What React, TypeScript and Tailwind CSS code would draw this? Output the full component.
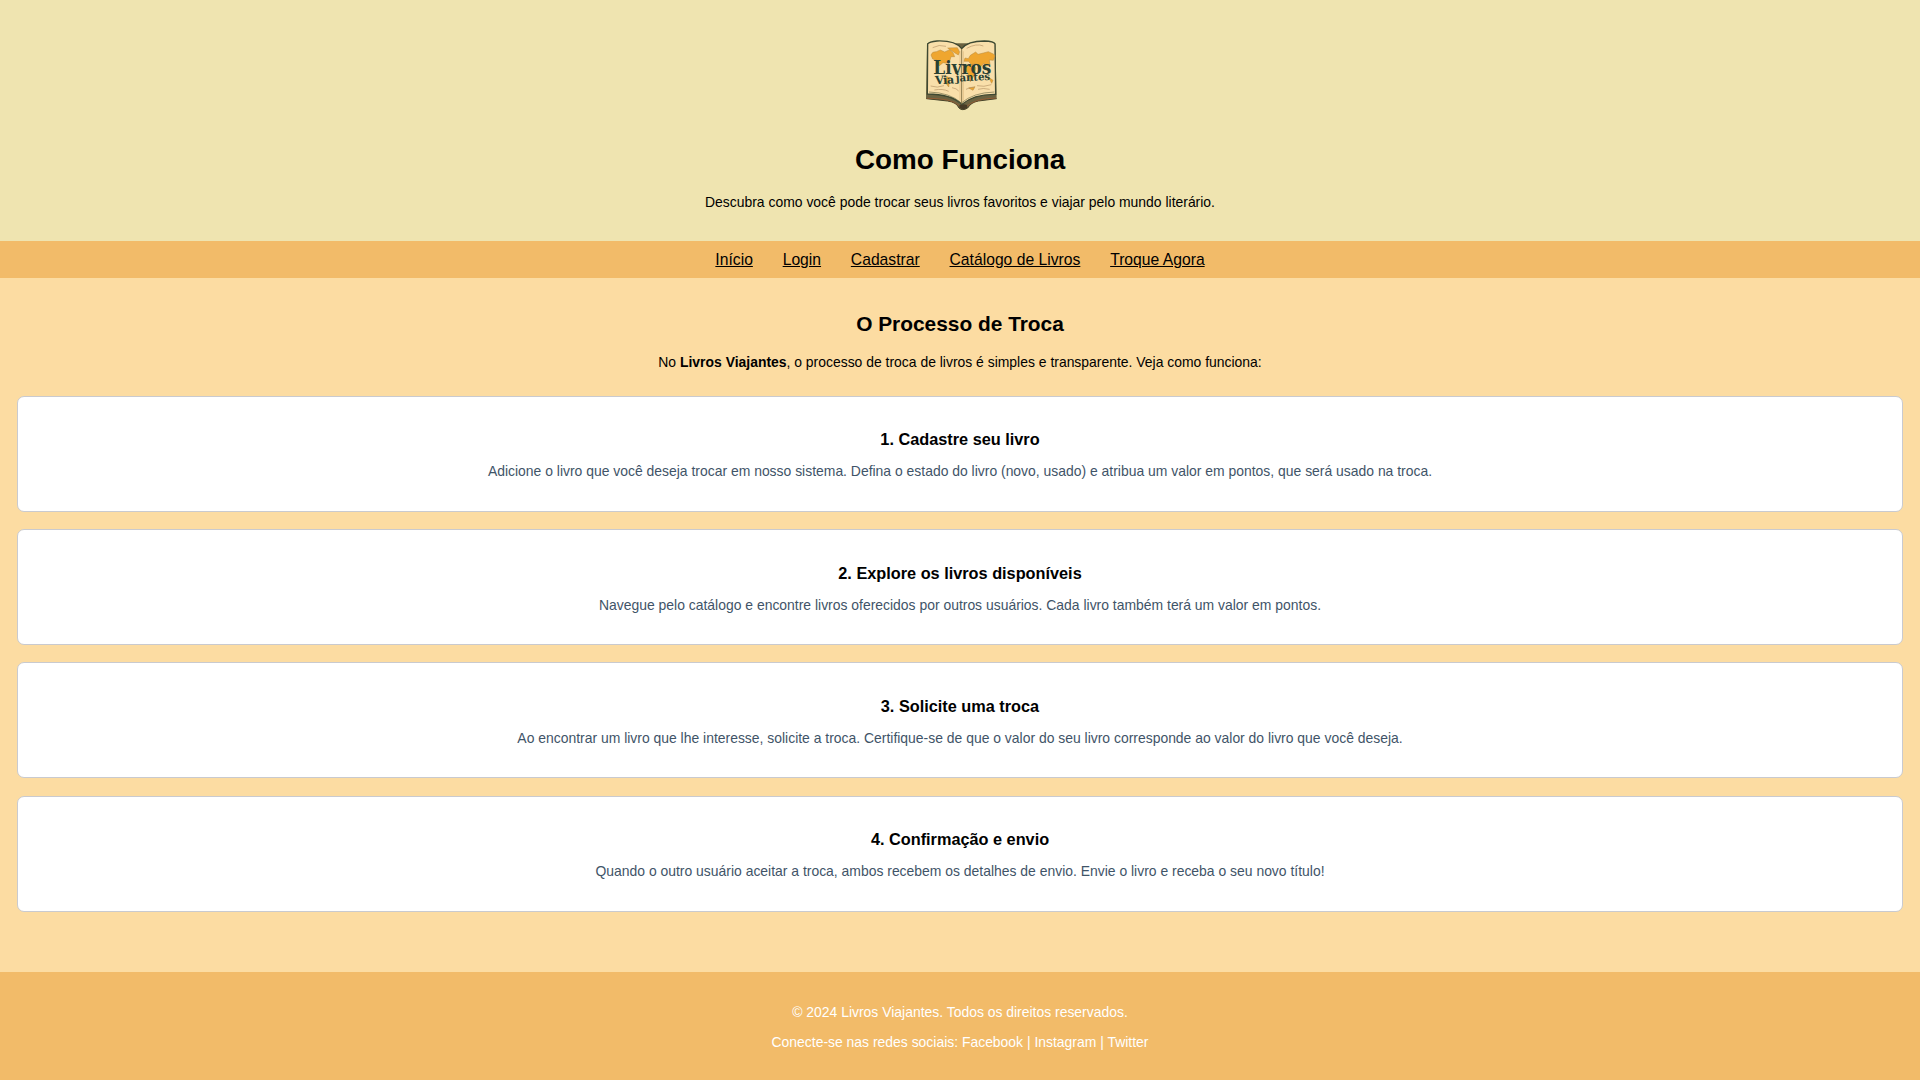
const steps = [
  ['1. Cadastre seu livro', 'Adicione o livro que você deseja trocar em nosso sistema. Defina o estado do livro (novo, usado) e atribua um valor em pontos, que será usado na troca.'],
  ['2. Explore os livros disponíveis', 'Navegue pelo catálogo e encontre livros oferecidos por outros usuários. Cada livro também terá um valor em pontos.'],
  ['3. Solicite uma troca', 'Ao encontrar um livro que lhe interesse, solicite a troca. Certifique-se de que o valor do seu livro corresponde ao valor do livro que você deseja.'],
  ['4. Confirmação e envio', 'Quando o outro usuário aceitar a troca, ambos recebem os detalhes de envio. Envie o livro e receba o seu novo título!'],
];

const links = ['Início', 'Login', 'Cadastrar', 'Catálogo de Livros', 'Troque Agora'];

function Logo() {
  return (
    <svg className="h-[90px] w-[92px]" viewBox="0 0 276 270" aria-label="Livros Viajantes">
      <path d="M36 40 L33 206 L98 213 Q125 217 132 234 Q142 244 158 234 Q168 217 190 213 L245 206 L241 40Z" fill="#6b6341" />
      <path d="M34 206 L98 213 Q125 217 132 234 Q142 244 158 234 Q168 217 190 213 L245 206" fill="none" stroke="#464329" strokeWidth="3" />
      <path d="M132 226 Q144 220 157 226 L156 234 Q144 241 134 234Z" fill="#453b25" />
      <path d="M36 205 Q110 204 134 228 M156 228 Q180 206 243 204" fill="none" stroke="#a65c31" strokeWidth="2" />
      <path d="M38 42 Q42 35 66 33 Q121 31 140 56 Q158 33 208 33 Q237 34 240 42 L242 193 Q176 192 141 223 Q108 192 37 192Z" fill="#f9dfaa" stroke="#3e4932" strokeWidth="4" />
      <path d="M42 186 Q106 188 139 219 Q174 188 238 186" fill="none" stroke="#71704a" strokeWidth="2" />
      <path d="M48 75 Q51 64 64 65 L76 60 L89 66 L104 59 L114 68 L119 80 L108 80 L104 94 L94 100 L84 98 L72 108 L66 91 L53 87Z M98 54 L127 53 L134 66 L130 75 L120 69Z M94 139 L104 144 L101 171 L93 160Z M147 94 L150 84 L160 86 L166 76 L182 66 L189 73 L205 69 L220 65 L235 72 L240 77 L235 91 L223 90 L225 103 L212 109 L207 99 L196 112 L184 101 L170 104 L160 94Z M151 107 L173 103 L183 113 L177 137 L166 155 L157 127 L145 120Z M221 142 L234 151 L230 160Z M161 174 L180 170 L174 181Z" fill="#efa62f" stroke="#b5893f" strokeWidth="1.5" />
      <path d="M140 57V221" stroke="#8a784a" strokeWidth="3" />
      <path d="M135 63V212 M145 64V212" stroke="#deb87b" strokeWidth="2" />
      <path d="M53 53q19-11 40-4 M155 55q29-16 50-7 M47 168q20 7 40-1 M58 180q25-5 43 4 M111 173q14 2 20 10 M153 178q13-8 25-5 M186 167q20 5 43-3 M189 178q15-5 35 0" fill="none" stroke="#b79466" strokeWidth="2" />
      <g fill="#293f33" fontFamily="'DejaVu Serif', serif" fontWeight="bold">
        <text x="55" y="132" fontSize="54" textLength="174" lengthAdjust="spacingAndGlyphs">Livros</text>
        <text x="61" y="163" fontSize="34" textLength="57" lengthAdjust="spacing" transform="rotate(-3 61 163)">Via</text>
        <text x="123" y="155" fontSize="32" textLength="103" lengthAdjust="spacingAndGlyphs" transform="rotate(-3 123 155)">jantes</text>
      </g>
    </svg>
  );
}

export default function App() {
  return (
    <div className="flex h-[1080px] flex-col bg-[#fcdca2] text-center font-['Liberation_Sans',sans-serif] text-[13.93px] leading-5 text-black">
      <header className="h-[241px] bg-[#efe4b0] pt-[30px]">
        <div className="flex justify-center pl-0.5"><Logo /></div>
        <h1 className="mt-6 text-[27.84px] leading-8 font-bold">Como Funciona</h1>
        <p className="mt-4">Descubra como você pode trocar seus livros favoritos e viajar pelo mundo literário.</p>
      </header>
      <nav className="flex h-[37px] items-center justify-center gap-[29.8px] bg-[#f2bb69] text-[15.7px]">
        {links.map((l) => <a key={l} href="#" className="leading-[37px] underline">{l}</a>)}
      </nav>
      <main className="grow px-[17.4px] pt-[34px]">
        <h2 className="text-[20.88px] leading-6 font-bold">O Processo de Troca</h2>
        <p className="mt-4">No <strong>Livros Viajantes</strong>, o processo de troca de livros é simples e transparente. Veja como funciona:</p>
        <div className="mt-6 flex flex-col gap-[17.2px]">
          {steps.map(([title, text]) => (
            <section key={title} className="h-[116px] rounded-[7px] border border-[#c9cacf] bg-white pt-[33.4px]">
              <h3 className="text-[16.29px] leading-[18px] font-bold">{title}</h3>
              <p className="mt-[13px] text-[#3f5468]">{text}</p>
            </section>
          ))}
        </div>
      </main>
      <footer className="flex h-[108px] flex-col gap-[10px] bg-[#f2bb69] pt-[30px] text-white">
        <p>© 2024 Livros Viajantes. Todos os direitos reservados.</p>
        <p>Conecte-se nas redes sociais: <a href="#">Facebook</a> | <a href="#">Instagram</a> | <a href="#">Twitter</a></p>
      </footer>
    </div>
  );
}
